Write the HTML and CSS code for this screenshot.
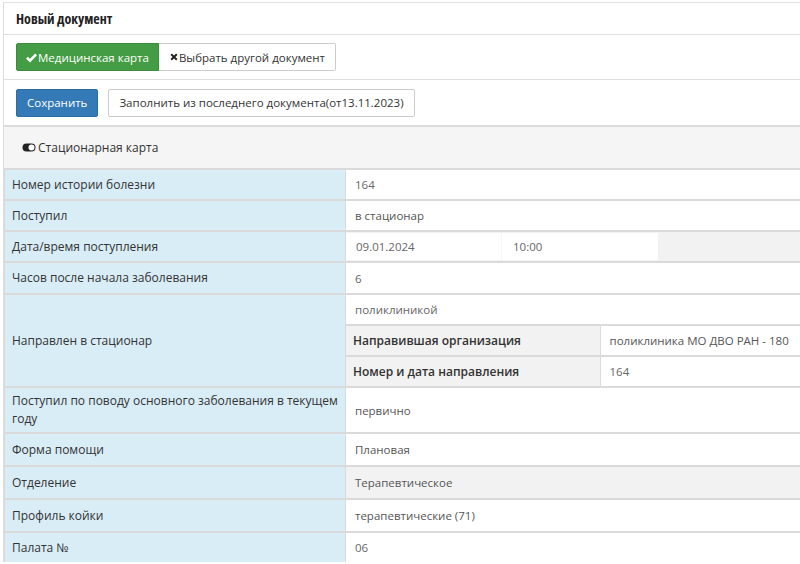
FILE: index.html
```html
<!DOCTYPE html>
<html lang="ru">
<head>
<meta charset="utf-8">
<title>Новый документ</title>
<link rel="stylesheet" href="styles.css">
</head>
<body>
<div class="panel">
  <div class="panel-title">Новый документ</div>
  <div class="toolbar">
    <div class="btn-group">
      <button class="btn btn-success"><svg class="ico" viewBox="0 0 12 12" width="11" height="11"><path d="M1 6.3 L4.4 9.4 L11 2.6" fill="none" stroke="#fff" stroke-width="2.8"/></svg>Медицинская карта</button>
      <button class="btn btn-default btn-joined"><svg class="ico" viewBox="0 0 10 10" width="8" height="8"><path d="M1.5 1.5 L8.5 8.5 M8.5 1.5 L1.5 8.5" stroke="#222" stroke-width="2.4"/></svg>Выбрать другой документ</button>
    </div>
  </div>
  <div class="toolbar toolbar-2">
    <button class="btn btn-primary">Сохранить</button>
    <button class="btn btn-default btn-fill">Заполнить из последнего документа(от13.11.2023)</button>
  </div>
  <div class="section-head">
    <svg class="toggle" viewBox="0 0 14 9" width="14" height="9"><rect x="0.5" y="0.5" width="13" height="8" rx="4" fill="#222"/><circle cx="9.5" cy="4.5" r="3" fill="#fff"/></svg>
    <span>Стационарная карта</span>
  </div>
  <table class="form-table">
    <colgroup><col class="c-label"><col></colgroup>
    <tr><td class="lbl">Номер истории болезни</td><td class="val">164</td></tr>
    <tr><td class="lbl">Поступил</td><td class="val dark">в стационар</td></tr>
    <tr><td class="lbl">Дата/время поступления</td>
      <td class="val gray dt"><div class="dt-wrap"><span class="inp inp-date">09.01.2024</span><span class="inp inp-time">10:00</span></div></td></tr>
    <tr class="r30"><td class="lbl">Часов после начала заболевания</td><td class="val">6</td></tr>
    <tr><td class="lbl">Направлен в стационар</td>
      <td class="nested-cell">
        <table class="nested">
          <colgroup><col class="c-nlabel"><col></colgroup>
          <tr><td colspan="2" class="val n-first">поликлиникой</td></tr>
          <tr><td class="nlbl">Направившая организация</td><td class="val dark">поликлиника МО ДВО РАН - 180</td></tr>
          <tr><td class="nlbl">Номер и дата направления</td><td class="val">164</td></tr>
        </table>
      </td></tr>
    <tr class="tall"><td class="lbl">Поступил по поводу основного заболевания в текущем году</td><td class="val dark">первично</td></tr>
    <tr class="r33"><td class="lbl">Форма помощи</td><td class="val dark">Плановая</td></tr>
    <tr class="r33"><td class="lbl">Отделение</td><td class="val dark gray">Терапевтическое</td></tr>
    <tr class="r33"><td class="lbl">Профиль койки</td><td class="val dark">терапевтические (71)</td></tr>
    <tr><td class="lbl">Палата №</td><td class="val">06</td></tr>
  </table>
</div>
</body>
</html>
```
FILE: styles.css
```css
html, body {
  margin: 0;
  padding: 0;
  background: #fff;
  overflow: hidden;
}
body {
  padding: 2px 0 0 3px;
  font-family: "Open Sans", "Liberation Sans", sans-serif;
  font-size: 12px;
  color: #333;
}
.panel {
  width: 820px;
  border-top: 1px solid #e2e2e2;
  border-left: 1px solid #dcdcdc;
}
.panel-title {
  height: 31px;
  line-height: 31px;
  padding-left: 12px;
  font-family: "Liberation Sans Narrow", "Open Sans", sans-serif;
  font-stretch: condensed;
  font-weight: bold;
  font-size: 14px;
  color: #222;
  border-bottom: 1px solid #e0e0e0;
}
.toolbar {
  display: flex;
  align-items: center;
  gap: 10px;
  height: 44px;
  padding: 0 12px;
  border-bottom: 1px solid #dedede;
}
.toolbar-2 {
  height: 45px;
  border-bottom: 2px solid #dcdcdc;
}
.btn-group {
  display: flex;
}
.btn {
  font-family: "Open Sans", "Liberation Sans", sans-serif;
  font-size: 11.5px;
  height: 28px;
  padding: 0 9px;
  border-radius: 2px;
  border: 1px solid #ccc;
  background: #fff;
  color: #333;
  display: inline-flex;
  align-items: center;
  cursor: pointer;
}
.btn-success {
  background: #449d44;
  border-color: #3d8b3d;
  color: #fff;
  border-radius: 2px 0 0 2px;
}
.btn-joined {
  border-left: none;
  border-radius: 0 2px 2px 0;
  padding: 0 10px 0 11px;
}
.btn-fill {
  padding: 0 10px;
}
.btn-primary {
  background: #337ab7;
  border-color: #2e6da4;
  color: #fff;
  padding: 0 10px;
}
.ico {
  margin-right: 1px;
}
.section-head {
  display: flex;
  align-items: center;
  gap: 2px;
  height: 41px;
  padding-left: 18px;
  background: #f5f5f5;
  color: #333;
}
.form-table {
  width: 100%;
  border-collapse: collapse;
  table-layout: fixed;
}
.c-label {
  width: 341px;
}
.form-table > tbody > tr > td {
  border-top: 2px solid #dadada;
  border-left: 1px solid #dadada;
  height: 29px;
  padding: 0;
  vertical-align: middle;
}
.form-table tr.r30 > td {
  height: 30px;
}
.form-table tr.tall > td {
  height: 44px;
}
.form-table tr.r33 > td {
  height: 31px;
}
.lbl {
  background: #d9edf7;
  padding: 0 6px 0 7px !important;
  color: #333;
  line-height: 18px;
}
.val {
  padding: 0 9px !important;
  color: #666;
  background: #fff;
  font-size: 11.5px;
}
.val.dark {
  color: #555;
}
.val.gray {
  background: #f2f2f2;
}
.dt {
  padding: 0 !important;
}
.dt-wrap {
  display: flex;
  height: 27px;
}
.inp {
  display: flex;
  align-items: center;
  background: #fff;
  height: 27px;
  padding-left: 10px;
  color: #666;
  box-sizing: border-box;
}
.inp-date {
  width: 155px;
}
.inp-time {
  width: 157px;
  padding-left: 11px;
  border-left: 1px solid #f6f6f6;
}
.nested-cell {
  padding: 0 !important;
  vertical-align: top;
}
.nested {
  width: 100%;
  border-collapse: collapse;
  table-layout: fixed;
}
.c-nlabel {
  width: 254px;
}
.nested td {
  padding: 0;
  height: 29px;
  vertical-align: middle;
}
.nested tr + tr td {
  border-top: 2px solid #dadada;
}
.nested td + td {
  border-left: 1px solid #dadada;
}
.nested .n-first {
  height: 29px;
}
.nlbl {
  background: #f2f2f2;
  font-weight: 600;
  color: #333;
  padding: 0 7px !important;
}
```
